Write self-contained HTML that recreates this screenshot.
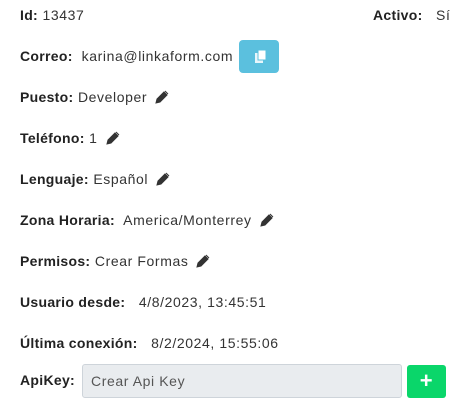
<html><head><style>
body{margin:0;width:474px;height:418px;background:#fff;font-family:"Liberation Sans",sans-serif;font-size:14px;letter-spacing:0.6px;color:#333;position:relative;overflow:hidden}
.r{position:absolute;left:20px;white-space:nowrap;line-height:18px}
b{font-weight:bold;color:#222;letter-spacing:0.3px}
.p{display:inline-block;vertical-align:-2px;margin-left:8px}
</style></head><body>
<div class="r" style="top:6px"><b>Id:</b> 13437</div>
<div class="r" style="top:6px;left:373px"><b>Activo:</b>&nbsp;&nbsp; Sí</div>
<div class="r" style="top:47px"><b>Correo:</b>&nbsp; karina@linkaform.com</div>
<div style="position:absolute;left:239px;top:40px;width:40px;height:33px;background:#5bc0de;border-radius:4px">
<svg width="40" height="33" viewBox="0 0 40 33"><rect x="16" y="13" width="8" height="10" fill="#e8f6fb"/><rect x="19" y="10" width="8" height="10" fill="#fff" stroke="#5bc0de" stroke-width="1"/></svg></div>
<div class="r" style="top:88px"><b>Puesto:</b> Developer<svg class="p" width="14" height="14" viewBox="0 0 14 14"><path d="M1 13l1-4 7-7 3 3-7 7z M10 1l3 3" fill="#333" stroke="#333"/></svg></div>
<div class="r" style="top:129px"><b>Teléfono:</b> 1<svg class="p" width="14" height="14" viewBox="0 0 14 14"><path d="M1 13l1-4 7-7 3 3-7 7z M10 1l3 3" fill="#333" stroke="#333"/></svg></div>
<div class="r" style="top:170px"><b>Lenguaje:</b> Español<svg class="p" width="14" height="14" viewBox="0 0 14 14"><path d="M1 13l1-4 7-7 3 3-7 7z M10 1l3 3" fill="#333" stroke="#333"/></svg></div>
<div class="r" style="top:211px"><b>Zona Horaria:</b>&nbsp; America/Monterrey<svg class="p" width="14" height="14" viewBox="0 0 14 14"><path d="M1 13l1-4 7-7 3 3-7 7z M10 1l3 3" fill="#333" stroke="#333"/></svg></div>
<div class="r" style="top:252px"><b>Permisos:</b> Crear Formas<svg class="p" width="14" height="14" viewBox="0 0 14 14"><path d="M1 13l1-4 7-7 3 3-7 7z M10 1l3 3" fill="#333" stroke="#333"/></svg></div>
<div class="r" style="top:293px"><b>Usuario desde:</b>&nbsp;&nbsp; 4/8/2023, 13:45:51</div>
<div class="r" style="top:334px"><b>Última conexión:</b>&nbsp;&nbsp; 8/2/2024, 15:55:06</div>
<div class="r" style="top:371px"><b>ApiKey:</b></div>
<div style="position:absolute;left:82px;top:364px;height:32px;background:#e9ecef;border:1px solid #ced4da;border-radius:3px;color:#555;line-height:32px;padding-left:8px;width:310px">Crear Api Key</div>
<div style="position:absolute;left:407px;top:365px;width:39px;height:33px;background:#0ad66a;border-radius:3px;color:#fff;font-size:22px;font-weight:bold;text-align:center;line-height:32px">+</div>
</body></html>
